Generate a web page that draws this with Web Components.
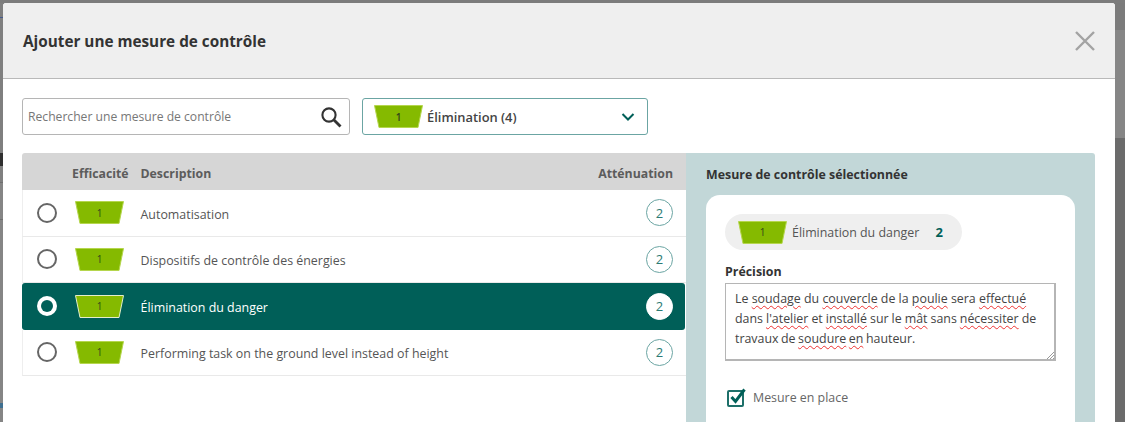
<!DOCTYPE html>
<html lang="fr"><head><meta charset="utf-8">
<style>
html,body{margin:0;height:422px;overflow:hidden}
body{background:#6c6c6c;font-family:"Open Sans","Noto Sans",sans-serif;color:#333}
</style></head><body>
<template id="t-app"><style>
:host{display:block;height:422px;overflow:hidden;box-sizing:border-box;padding:3px 10px 0 3px;
background:
linear-gradient(#7c7c7c 0 3px,transparent 3px),
linear-gradient(#7f7f7f 0 17px,#44598c 17px 18px,#7f7f7f 18px 153px,#2f2f2f 153px 166px,#808080 166px 182px,#6f6f6f 182px 183px,#858585 183px 219px,#6f6f6f 219px 220px,#858585 220px 403px,#3f6f90 403px 408px,#858585 408px) left top/3px 100% no-repeat,
linear-gradient(#7b7b7b 0 30px,#868686 30px 138px,#6b6b6b 138px) right top/10px 100% no-repeat,
#6b6b6b}
</style><slot></slot></template>

<template id="t-modal"><style>
:host{display:block;background:#fff;border-radius:3px 3px 0 0;height:419px;overflow:hidden}
header{height:76px;box-sizing:border-box;background:#efefef;border-bottom:1px solid #b9b9b9;display:flex;align-items:center;justify-content:space-between;padding:0 19px 0 20px}
h1{margin:0;font-size:15.3px;font-weight:700;color:#333}
svg{display:block}
main{padding:19px 20px 0 19px}
</style><header><h1>Ajouter une mesure de contrôle</h1>
<svg width="22" height="22" viewBox="0 0 22 22"><path d="M2 2 20 20M20 2 2 20" stroke="#a3a3a3" stroke-width="2.4" fill="none"/></svg></header>
<main><slot></slot></main></template>

<template id="t-trap"><style>
:host{display:inline-flex;width:49px;height:23px;flex:none;align-items:center;justify-content:center;position:relative;font-size:10px;color:#33461a}
svg{position:absolute;inset:0;overflow:visible}
span{position:relative}
path{stroke:var(--trap-edge,#b5d64d)}
</style><svg width="49" height="23" viewBox="0 0 49 23"><path d="M.5.5h48L44 22.5H5z" fill="#85ba00"/></svg><span><slot></slot></span></template>

<template id="t-toolbar"><style>
:host{display:flex;gap:12px;height:37px;margin-bottom:18px}
.search{width:328px;box-sizing:border-box;border:1px solid #b5b5b5;border-radius:3px;display:flex;align-items:center;justify-content:space-between;padding:0 7px 0 5px;font-size:12.15px;color:#777}
.sel{width:286px;box-sizing:border-box;border:1px solid #6ba5a3;border-radius:3px;display:flex;align-items:center;padding:0 12px 0 11px;font-size:12.9px;font-weight:600;color:#444}
.sel span{margin-left:4px;flex:1}
svg{display:block}
</style><div class="search">Rechercher une mesure de contrôle
<svg width="22" height="22" viewBox="0 0 22 22"><circle cx="9" cy="9" r="6.6" fill="none" stroke="#333" stroke-width="2.1"/><path d="M14 14 20.500 20.500" stroke="#333" stroke-width="2.800"/></svg></div>
<div class="sel"><x-trap>1</x-trap><span>Élimination (4)</span>
<svg width="14" height="10" viewBox="0 0 14 10"><path d="M1.500 2 7 7.500 12.500 2" fill="none" stroke="#005f58" stroke-width="2"/></svg></div></template>

<template id="t-split"><style>
:host{display:grid;grid-template-columns:664px 409px;height:400px}
</style><slot></slot></template>

<template id="t-table"><style>
:host{display:block}
.head{height:37px;box-sizing:border-box;padding:3px 13px 0 50px;background:#d6d6d6;border-radius:3px 0 0 0;display:flex;align-items:center;font-size:12.3px;font-weight:700;color:#5c5c5c}
.e{width:68.500px}.d{flex:1}
</style><div class="head"><span class="e">Efficacité</span><span class="d">Description</span><span>Atténuation</span></div>
<div class="body"><slot></slot></div></template>

<template id="t-row"><style>
:host{display:flex;align-items:center;height:46.5px;box-sizing:border-box;border-bottom:1px solid #e9e9e9;border-left:1px solid #eee;padding:0 13px 0 14px;font-size:12.42px;color:#555}
:host([selected]){background:#005f58;color:#fff;border:0;border-radius:3px;margin:0 1px 0 0;padding:0 12px 0 15px;--trap-edge:#e4eecb}
.radio{width:20px;height:20px;box-sizing:border-box;border:2px solid #666;border-radius:50%;margin-right:18px;background:#fff;flex:none}
:host([selected]) .radio{border:0;padding:4px}
:host([selected]) .radio::after{content:"";display:block;width:12px;height:12px;border-radius:50%;background:#005f58}
.txt{flex:1;margin-left:16.5px;padding-top:3px}
.n{width:27px;height:27px;box-sizing:border-box;border:1px solid #6ba5a3;border-radius:50%;display:flex;align-items:center;justify-content:center;font-size:13px;color:#2b7a74}
:host([selected]) .n{background:#fff;border-color:#fff}
</style><span class="radio"></span><x-trap>1</x-trap><span class="txt"><slot></slot></span><span class="n">2</span></template>

<template id="t-panel"><style>
:host{display:block;background:#c2d7d8;border-radius:0 3px 0 0;padding:12px 20px 0}
h2{margin:0 0 11px;font-size:12.400px;font-weight:700;color:#333;line-height:19px}
.card{background:#fff;border-radius:14px 14px 0 0;padding:19px 19px 0;height:300px}
.pill{display:flex;align-items:center;height:36px;box-sizing:border-box;width:237px;background:#efefef;border-radius:18px;padding-left:13px;font-size:12.400px;color:#555}
.pill span{margin-left:5px;flex:1}
.pill b{color:#005f58;margin-right:19px;font-size:13px}
label{display:block;font-size:12.400px;font-weight:700;margin:13px 0 2px;color:#333;line-height:18px}
</style><h2>Mesure de contrôle sélectionnée</h2>
<div class="card"><div class="pill"><x-trap>1</x-trap><span>Élimination du danger</span><b>2</b></div>
<label>Précision</label><slot></slot></div></template>

<template id="t-area"><style>
:host{display:block;position:relative;width:331px;height:78px;box-sizing:border-box;border:1px solid #b5b5b5;border-width:1px 2px 2px 1px;padding:5px 9px;font-size:12.400px;line-height:20px;color:#444;margin-bottom:26px;white-space:nowrap}
svg{position:absolute;right:0;bottom:0}
</style><slot></slot><svg width="8" height="8" viewBox="0 0 8 8"><path d="M1 8 8 1M4 8 8 4M7 8 8 7" stroke="#999"/></svg></template>

<template id="t-line"><style>:host{display:block}</style><slot></slot></template>
<template id="t-typo"><style>:host{display:inline;text-decoration:underline wavy #e33 1px;text-underline-offset:2px}</style><slot></slot></template>

<template id="t-check"><style>
:host{display:flex;align-items:center;font-size:12.400px;color:#666;height:20px;padding-left:2px}
svg{margin-right:7px;display:block}
</style><svg width="19" height="19" viewBox="0 0 19 19"><rect x="1" y="3" width="15" height="15" rx="1" fill="none" stroke="#1d6f69" stroke-width="2"/><path d="M4.500 9 8.500 13.500 17.500 1.500" fill="none" stroke="#005f58" stroke-width="3"/></svg><slot></slot></template>

<x-app><x-modal>
<x-toolbar></x-toolbar>
<x-split>
<x-table>
<x-row>Automatisation</x-row>
<x-row>Dispositifs de contrôle des énergies</x-row>
<x-row selected>Élimination du danger</x-row>
<x-row>Performing task on the ground level instead of height</x-row>
</x-table>
<x-panel>
<x-area>
<x-line>Le <x-typo>soudage</x-typo> du <x-typo>couvercle</x-typo> de la <x-typo>poulie</x-typo> sera <x-typo>effectué</x-typo></x-line>
<x-line style="word-spacing:-.2px">dans <x-typo>l'atelier</x-typo> et <x-typo>installé</x-typo> sur le <x-typo>mât</x-typo> sans <x-typo>nécessiter</x-typo> de</x-line>
<x-line style="word-spacing:-.7px">travaux de <x-typo>soudure</x-typo> <x-typo>en</x-typo> hauteur.</x-line>
</x-area>
<x-check>Mesure en place</x-check>
</x-panel>
</x-split>
</x-modal></x-app>
<script>
for(const [tag,id] of [['x-app','t-app'],['x-modal','t-modal'],['x-trap','t-trap'],['x-toolbar','t-toolbar'],['x-split','t-split'],['x-table','t-table'],['x-row','t-row'],['x-panel','t-panel'],['x-area','t-area'],['x-line','t-line'],['x-typo','t-typo'],['x-check','t-check']]){
customElements.define(tag,class extends HTMLElement{constructor(){super();this.attachShadow({mode:'open'}).append(document.getElementById(id).content.cloneNode(true));}});
}
</script>
</body></html>
